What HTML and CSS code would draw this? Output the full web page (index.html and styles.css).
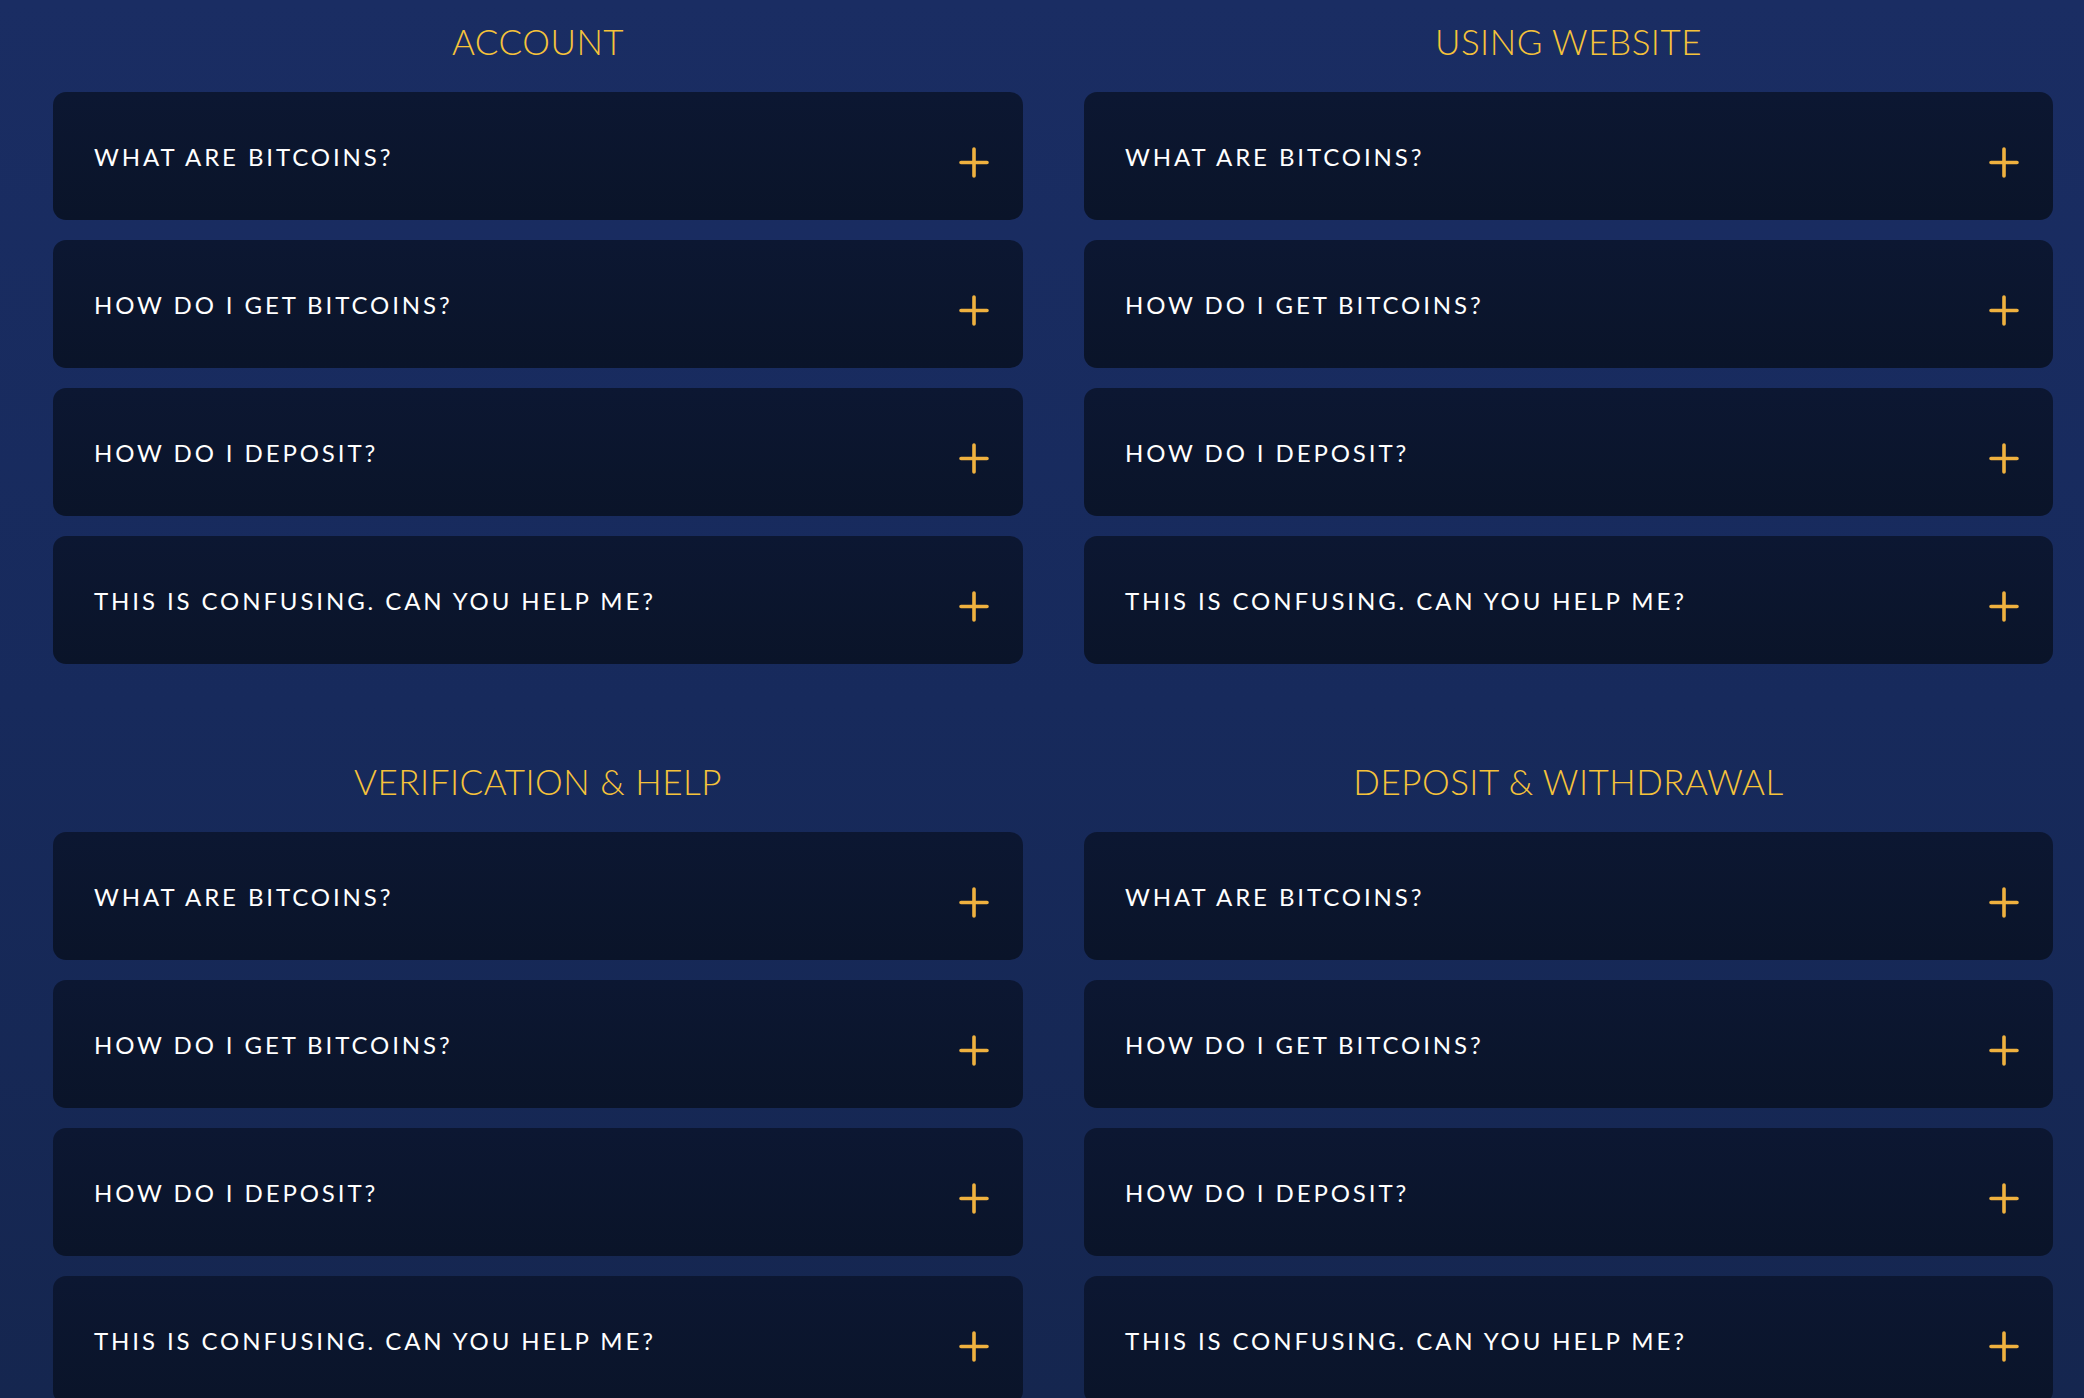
FILE: index.html
```html
<!DOCTYPE html>
<html lang="en">
<head>
  <meta charset="UTF-8" />
  <meta name="viewport" content="width=device-width, initial-scale=1.0"/>
  <title>FAQ</title>
  <link rel="stylesheet" href="styles.css">
</head>
<body>
  <div class="faq-grid">

    <section class="faq-section">
      <h2>ACCOUNT</h2>
      <div class="faq-list">
        <div class="faq-item"><span>WHAT ARE BITCOINS?</span><svg class="plus" viewBox="0 0 30 31"><path d="M15 2v27M2 15.5h26"/></svg></div>
        <div class="faq-item"><span>HOW DO I GET BITCOINS?</span><svg class="plus" viewBox="0 0 30 31"><path d="M15 2v27M2 15.5h26"/></svg></div>
        <div class="faq-item"><span>HOW DO I DEPOSIT?</span><svg class="plus" viewBox="0 0 30 31"><path d="M15 2v27M2 15.5h26"/></svg></div>
        <div class="faq-item"><span>THIS IS CONFUSING. CAN YOU HELP ME?</span><svg class="plus" viewBox="0 0 30 31"><path d="M15 2v27M2 15.5h26"/></svg></div>
      </div>
    </section>

    <section class="faq-section">
      <h2>USING WEBSITE</h2>
      <div class="faq-list">
        <div class="faq-item"><span>WHAT ARE BITCOINS?</span><svg class="plus" viewBox="0 0 30 31"><path d="M15 2v27M2 15.5h26"/></svg></div>
        <div class="faq-item"><span>HOW DO I GET BITCOINS?</span><svg class="plus" viewBox="0 0 30 31"><path d="M15 2v27M2 15.5h26"/></svg></div>
        <div class="faq-item"><span>HOW DO I DEPOSIT?</span><svg class="plus" viewBox="0 0 30 31"><path d="M15 2v27M2 15.5h26"/></svg></div>
        <div class="faq-item"><span>THIS IS CONFUSING. CAN YOU HELP ME?</span><svg class="plus" viewBox="0 0 30 31"><path d="M15 2v27M2 15.5h26"/></svg></div>
      </div>
    </section>

    <section class="faq-section">
      <h2>VERIFICATION &amp; HELP</h2>
      <div class="faq-list">
        <div class="faq-item"><span>WHAT ARE BITCOINS?</span><svg class="plus" viewBox="0 0 30 31"><path d="M15 2v27M2 15.5h26"/></svg></div>
        <div class="faq-item"><span>HOW DO I GET BITCOINS?</span><svg class="plus" viewBox="0 0 30 31"><path d="M15 2v27M2 15.5h26"/></svg></div>
        <div class="faq-item"><span>HOW DO I DEPOSIT?</span><svg class="plus" viewBox="0 0 30 31"><path d="M15 2v27M2 15.5h26"/></svg></div>
        <div class="faq-item"><span>THIS IS CONFUSING. CAN YOU HELP ME?</span><svg class="plus" viewBox="0 0 30 31"><path d="M15 2v27M2 15.5h26"/></svg></div>
      </div>
    </section>

    <section class="faq-section">
      <h2>DEPOSIT &amp; WITHDRAWAL</h2>
      <div class="faq-list">
        <div class="faq-item"><span>WHAT ARE BITCOINS?</span><svg class="plus" viewBox="0 0 30 31"><path d="M15 2v27M2 15.5h26"/></svg></div>
        <div class="faq-item"><span>HOW DO I GET BITCOINS?</span><svg class="plus" viewBox="0 0 30 31"><path d="M15 2v27M2 15.5h26"/></svg></div>
        <div class="faq-item"><span>HOW DO I DEPOSIT?</span><svg class="plus" viewBox="0 0 30 31"><path d="M15 2v27M2 15.5h26"/></svg></div>
        <div class="faq-item"><span>THIS IS CONFUSING. CAN YOU HELP ME?</span><svg class="plus" viewBox="0 0 30 31"><path d="M15 2v27M2 15.5h26"/></svg></div>
      </div>
    </section>

  </div>
</body>
</html>
```

FILE: styles.css
```css
* {
  box-sizing: border-box;
}

html {
  background: linear-gradient(180deg, #1a2d63 0%, #172a5c 50%, #15264f 100%);
  min-height: 100%;
}

body {
  margin: 0;
  padding: 0 31px 0 53px;
  font-family: 'Lato', 'Noto Sans', sans-serif;
  color: #fff;
}

.faq-grid {
  display: grid;
  grid-template-columns: 970px 969px;
  column-gap: 61px;
  row-gap: 76px;
}

.faq-section {
  padding-top: 16px;
}

.faq-section h2 {
  margin: 0 0 26px;
  height: 50px;
  line-height: 50px;
  text-align: center;
  font-size: 35px;
  font-weight: 300;
  color: #f6c33a;
  letter-spacing: 0.5px;
}

.faq-list {
  display: flex;
  flex-direction: column;
  gap: 20px;
}

.faq-item {
  height: 128px;
  background: linear-gradient(180deg, #0c1732 0%, #0a1429 100%);
  border-radius: 13px;
  padding: 0 34px 0 41px;
  display: flex;
  justify-content: space-between;
  align-items: center;
  font-size: 24px;
  letter-spacing: 2.9px;
}

.faq-item span {
  padding-top: 1px;
}

.plus {
  width: 30px;
  height: 31px;
  margin-top: 12px;
  fill: none;
  stroke: #efb13f;
  stroke-width: 3.6;
  stroke-linecap: round;
}
```
